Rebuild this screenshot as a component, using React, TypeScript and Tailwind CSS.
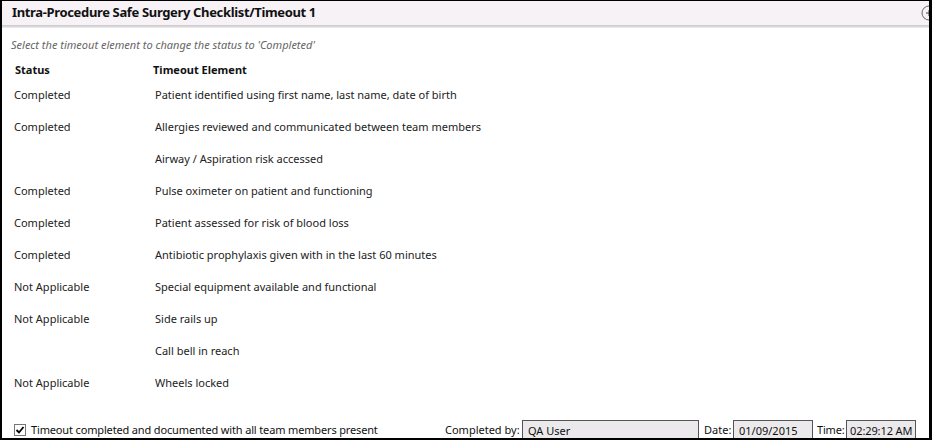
const rows: { status: string; element: string }[] = [
  { status: 'Completed', element: 'Patient identified using first name, last name, date of birth' },
  { status: 'Completed', element: 'Allergies reviewed and communicated between team members' },
  { status: '', element: 'Airway / Aspiration risk accessed' },
  { status: 'Completed', element: 'Pulse oximeter on patient and functioning' },
  { status: 'Completed', element: 'Patient assessed for risk of blood loss' },
  { status: 'Completed', element: 'Antibiotic prophylaxis given with in the last 60 minutes' },
  { status: 'Not Applicable', element: 'Special equipment available and functional' },
  { status: 'Not Applicable', element: 'Side rails up' },
  { status: '', element: 'Call bell in reach' },
  { status: 'Not Applicable', element: 'Wheels locked' },
]

const font = { fontFamily: '"Noto Sans", "Open Sans", sans-serif' }

export default function App() {
  return (
    <div className="w-[932px] h-[440px] bg-black pl-[2px] pt-[1px] pr-[3px] pb-[2px]" style={font}>
      <div className="w-full h-full bg-white flex flex-col overflow-hidden">
        <div className="relative h-[24px] shrink-0 bg-[#f6f2f5] flex items-center pl-[10px]">
          <span className="text-[13px] font-bold text-[#111] tracking-[-0.35px]">
            Intra-Procedure Safe Surgery Checklist/Timeout 1
          </span>
          <svg className="absolute right-[-8px] top-[4px]" width="16" height="16" viewBox="0 0 16 16">
            <circle cx="8" cy="8" r="7" fill="#f6f2f5" stroke="#666" strokeWidth="1" />
            <path d="M5 8 H11 M8 5 V11" stroke="#444" strokeWidth="1" />
          </svg>
        </div>
        <div className="h-[3px] shrink-0 bg-gradient-to-b from-[#c9c5c9] to-[#efedef]" />

        <div className="pl-[9px] pt-[10px] text-[11px] italic text-[#666] leading-[14px]">
          Select the timeout element to change the status to 'Completed'
        </div>

        <div className="flex pt-[11px] text-[11px] font-bold text-[#111] leading-[14px]">
          <span className="w-[151px] pl-[13px]">Status</span>
          <span>Timeout Element</span>
        </div>

        <div className="flex flex-col pt-[2px]">
          {rows.map((r, i) => (
            <div key={i} className="flex h-[32px] items-center text-[11px] text-[#222]">
              <span className="w-[153px] pl-[12px]">{r.status}</span>
              <span>{r.element}</span>
            </div>
          ))}
        </div>

        <div className="mt-auto flex items-end text-[11px] text-[#111] leading-[15px]">
          <label className="w-[443px] flex items-center pl-[12px] pb-[1px]">
            <span className="w-[12px] h-[12px] border border-[#777] bg-white flex items-center justify-center">
              <svg width="10" height="10" viewBox="0 0 10 10">
                <path d="M1.5 5 L4 7.5 L8.5 2" fill="none" stroke="#000" strokeWidth="1.8" />
              </svg>
            </span>
            <span className="ml-[5px] tracking-[-0.15px]">Timeout completed and documented with all team members present</span>
          </label>
          <span className="w-[77px] pb-[1px]">Completed by:</span>
          <div className="w-[177px] h-[18px] border border-[#555] border-b-0 bg-[#ece9ec] pl-[5px] pt-[2px]">QA User</div>
          <span className="w-[34px] pl-[5px] pb-[1px]">Date:</span>
          <div className="w-[80px] h-[18px] border border-[#555] border-b-0 bg-[#ece9ec] pl-[5px] pt-[2px]">01/09/2015</div>
          <span className="w-[33px] pl-[4px] pb-[1px] tracking-[-0.2px]">Time:</span>
          <div className="w-[70px] h-[18px] border border-[#555] border-b-0 bg-[#ece9ec] pl-[3px] pt-[2px] whitespace-nowrap tracking-[-0.1px]">02:29:12 AM</div>
        </div>
      </div>
    </div>
  )
}
